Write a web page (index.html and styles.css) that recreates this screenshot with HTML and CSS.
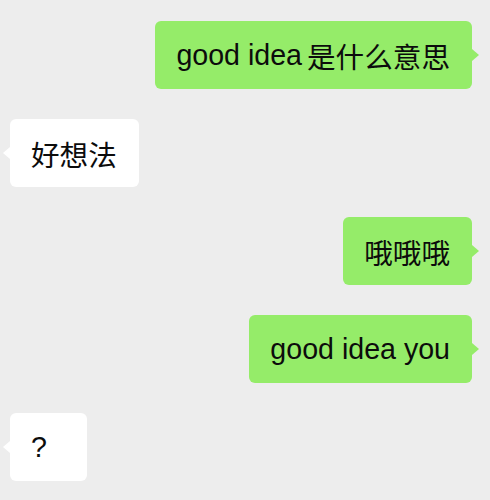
FILE: index.html
```html
<!DOCTYPE html>
<html lang="zh">
<head>
<meta charset="utf-8">
<link rel="stylesheet" href="styles.css">
</head>
<body>
<div class="chat">
  <div class="row mine"><div class="bubble green">good idea<span class="cjk">是什么意思</span></div></div>
  <div class="row theirs"><div class="bubble white">好想法</div></div>
  <div class="row mine"><div class="bubble green">哦哦哦</div></div>
  <div class="row mine"><div class="bubble green">good idea you</div></div>
  <div class="row theirs"><div class="bubble white short">?</div></div>
</div>
</body>
</html>
```
FILE: styles.css
```css
html, body {
  margin: 0;
  padding: 0;
  background: #ededed;
}
.chat {
  width: 490px;
  height: 500px;
  box-sizing: border-box;
  padding: 21px 18px 0 10px;
  display: flex;
  flex-direction: column;
  gap: 30px;
  font-family: "Liberation Sans", "Noto Sans CJK SC", sans-serif;
  font-size: 28.6px;
  color: #0c0c0c;
  overflow: hidden;
}
.row {
  display: flex;
}
.mine {
  justify-content: flex-end;
}
.theirs {
  justify-content: flex-start;
}
.bubble {
  position: relative;
  height: 68px;
  box-sizing: border-box;
  padding: 0 22px 0 21px;
  display: flex;
  align-items: center;
  border-radius: 6px;
  white-space: nowrap;
}
.cjk {
  margin-left: 5px;
}
.green {
  background: #95ec69;
}
.white {
  background: #ffffff;
}
.short {
  min-width: 77px;
}
.green::after {
  content: "";
  position: absolute;
  left: 100%;
  top: 50%;
  margin-top: -6px;
  border-top: 6px solid transparent;
  border-bottom: 6px solid transparent;
  border-left: 7px solid #95ec69;
}
.white::before {
  content: "";
  position: absolute;
  right: 100%;
  top: 50%;
  margin-top: -6px;
  border-top: 6px solid transparent;
  border-bottom: 6px solid transparent;
  border-right: 7px solid #ffffff;
}
```
